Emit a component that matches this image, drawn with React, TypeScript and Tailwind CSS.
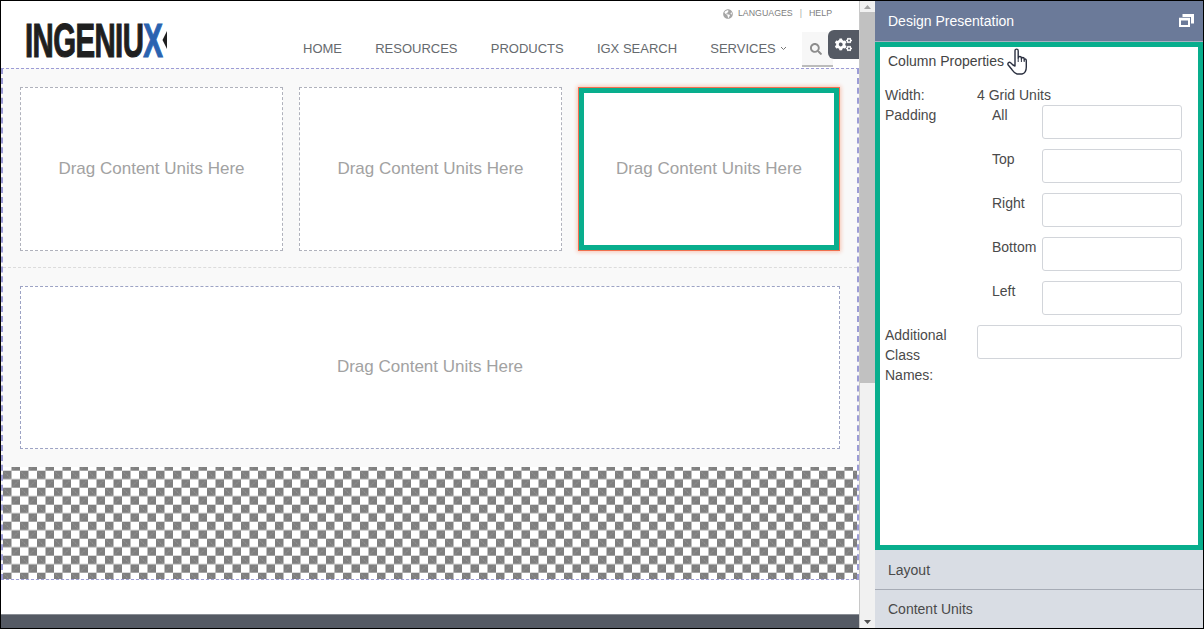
import { FaCogs, FaSearch, FaGlobeAmericas } from "react-icons/fa";

const font = "font-['Liberation_Sans',Arial,sans-serif]";

function Drop({ className }: { className: string }) {
  return (
    <div className={`flex items-center justify-center bg-white text-[17px] text-[#a2a2a2] ${className}`}>
      Drag Content Units Here
    </div>
  );
}

function PadRow({ label }: { label: string }) {
  return (
    <div className="flex h-[44px] items-start">
      <div className="w-[50px] text-[#4a4a4a]">{label}</div>
      <div className="h-[34px] w-[140px] rounded-[3px] border border-[#d2d5da] bg-white" />
    </div>
  );
}

function Checker() {
  return (
    <svg className="block h-full w-full" aria-hidden="true">
      <defs>
        <pattern id="chk" width="17" height="17" patternUnits="userSpaceOnUse" patternTransform="translate(0 3.7)">
          <rect width="17" height="17" fill="#ffffff" />
          <rect x="0" y="0" width="8.5" height="8.5" fill="#7f7f7f" />
          <rect x="8.5" y="8.5" width="8.5" height="8.5" fill="#7f7f7f" />
          <path d="M0.5 0.5 L8 8" stroke="#a0a0a0" strokeWidth="0.8" strokeDasharray="1.5 1" />
          <path d="M9 16.5 L16.5 9" stroke="#a0a0a0" strokeWidth="0.8" strokeDasharray="1.5 1" />
        </pattern>
      </defs>
      <rect width="100%" height="100%" fill="url(#chk)" />
    </svg>
  );
}

export default function App() {
  return (
    <div className={`relative flex h-[629px] w-[1204px] overflow-hidden border border-black bg-white text-[14px] ${font}`}>
      {/* page area */}
      <div className="flex w-[859px] flex-col border-r border-[#c8c8c8]">
        <header className="relative flex h-[67px] shrink-0 pl-[24px]">
          <div className="relative mt-[21px] h-[36px] w-[142px]">
            <div className="w-max origin-top-left scale-x-[0.6] whitespace-nowrap text-[49px] font-bold leading-[36px] tracking-[-1px] text-[#1f1f1f] [-webkit-text-stroke:1.2px_#1f1f1f]">
              INGENIU<span className="text-[#2a63b0] [-webkit-text-stroke:1.2px_#2a63b0]">X</span>
            </div>
            <svg className="absolute right-0 top-[8px]" width="5" height="20" viewBox="0 0 5 20">
              <path d="M5 1 L0.5 10 L5 19 Z" fill="#1f1f1f" />
            </svg>
          </div>
          <div className="flex-1">
            <div className="flex h-[26px] items-center justify-end gap-[7px] pr-[27px] text-[8.8px] text-[#808080]">
              <FaGlobeAmericas className="mr-[-2px] text-[10px] text-[#a5a5a5]" />
              <span>LANGUAGES</span>
              <span className="text-[#aaa]">|</span>
              <span>HELP</span>
            </div>
            <nav className="flex h-[40px] items-start pl-[136px] text-[13px] text-[#666a6e]">
              <div className="flex h-[43px] items-center gap-[33.2px] whitespace-nowrap">
                <span>HOME</span>
                <span>RESOURCES</span>
                <span>PRODUCTS</span>
                <span>IGX SEARCH</span>
                <span className="flex items-center gap-[4px]">
                  SERVICES
                  <svg width="7" height="5" viewBox="0 0 7 5"><path d="M1 1 L3.5 3.5 L6 1" fill="none" stroke="#777" /></svg>
                </span>
              </div>
              <div className="ml-[15px] mt-[5px] flex h-[35px] w-[31px] items-center justify-center border-b-2 border-[#bbb] bg-[#f7f7f7] pr-[2px] pt-px">
                <FaSearch className="text-[12px] text-[#8d8d8d]" />
              </div>
            </nav>
          </div>
          <div className="absolute right-0 top-[29px] flex h-[29px] w-[31px] items-center justify-center rounded-l-[6px] bg-[#555a64]">
            <FaCogs className="text-[17px] text-white" />
          </div>
        </header>

        <main className="flex h-[512px] flex-col border-x-2 border-y border-dashed border-[#9c9cd6] bg-[#f9f9f9]">
          <section className="flex h-[199px] shrink-0 gap-4 border-b border-dashed border-[#dcdcdc] pl-[17px] pt-[18px]">
            <Drop className="h-[164px] w-[263px] border border-dashed border-[#b0b2bc]" />
            <Drop className="h-[164px] w-[263px] border border-dashed border-[#b0b2bc]" />
            <Drop className="ml-px mt-px h-[162px] w-[260px] border-[5px] border-[#08ae8d] shadow-[0_0_0_1px_#f0704f,0_0_4px_2px_#f7c4b3]" />
          </section>
          <section className="h-[199px] shrink-0 pl-[17px] pt-[18px]">
            <Drop className="h-[163px] w-[820px] border border-dashed border-[#9da3c4] pb-[1px]" />
          </section>
          <section className="min-h-0 flex-1">
            <Checker />
          </section>
        </main>

        <div className="h-[34px] shrink-0 bg-white" />
        <div className="flex-1 border-t border-[#8a8e95] bg-[#555a64]" />
      </div>

      {/* scrollbar */}
      <div className="flex w-[15px] shrink-0 flex-col items-center bg-[#f1f1f1]">
        <svg className="mt-[4px] shrink-0" width="7" height="4" viewBox="0 0 7 4"><path d="M3.5 0 L7 4 L0 4 Z" fill="#a3a3a3" /></svg>
        <div className="mt-[3px] h-[371px] w-full shrink-0 bg-[#c1c1c1]" />
        <div className="flex-1" />
        <svg className="mb-[4px] shrink-0" width="7" height="4" viewBox="0 0 7 4"><path d="M0 0 L7 0 L3.5 4 Z" fill="#505050" /></svg>
      </div>

      {/* right panel */}
      <aside className="flex flex-1 flex-col">
        <div className="flex h-[41px] shrink-0 items-center justify-between border-b border-[#a8b0c2] bg-[#6b7a99] pl-[13px] pr-[9px] font-medium text-white">
          <span>Design Presentation</span>
          <svg width="15" height="13" viewBox="0 0 15 13" className="mb-[2px]">
            <path d="M3.5 0 H15 V9.5 H12 V3 H3.5 Z M0 3.8 H11 V13 H0 Z M2 6.5 V11 H9 V6.5 Z" fill="#fff" fillRule="evenodd" />
          </svg>
        </div>
        <div className="relative h-[508px] shrink-0 border-[5px] border-[#08ae8d] bg-white text-[#4a4a4a]">
          <div className="pl-[8px] pt-[5px] leading-[18px] text-[#444]">Column Properties</div>
          <div className="mt-[15px] pl-[5px]">
            <div className="flex h-[20px] items-center">
              <div className="w-[92px]">Width:</div>
              <div>4 Grid Units</div>
            </div>
            <div className="flex">
              <div className="w-[107px]">Padding</div>
              <div>
                <PadRow label="All" />
                <PadRow label="Top" />
                <PadRow label="Right" />
                <PadRow label="Bottom" />
                <PadRow label="Left" />
              </div>
            </div>
            <div className="flex">
              <div className="w-[92px] leading-[20px]">Additional<br />Class<br />Names:</div>
              <div className="h-[34px] w-[205px] rounded-[3px] border border-[#d2d5da] bg-white" />
            </div>
          </div>
          <svg className="absolute left-[127px] top-[1px]" width="20" height="27" viewBox="0 0 20 27" aria-hidden="true">
            <path
              d="M8 14 V2.8 C8 0.6 11.2 0.6 11.2 2.8 V10 C11.2 8 14.4 8 14.4 10 V11 C14.4 9 17.2 9 17.2 11 V12 C17.2 10.5 19.3 10.5 19.3 12.5 V19 C19.3 23 17.5 25.5 15 26 H10 C7.5 25.5 6 23 4.5 21 L1.2 17 C0.2 15.5 2 13.5 3.6 14.8 L6 17 L8 18 Z"
              fill="#fff"
              stroke="#2b3040"
              strokeWidth="1.4"
              strokeLinejoin="round"
            />
            <path d="M11.2 10 V14 M14.4 11 V14 M17.2 12 V14" fill="none" stroke="#2b3040" strokeWidth="1" />
          </svg>
        </div>
        <div className="flex h-[40px] shrink-0 items-center border-b border-[#a6abb5] bg-[#d9dde4] pl-[13px] pt-px text-[#4a4a4a]">Layout</div>
        <div className="flex flex-1 items-center bg-[#d9dde4] pl-[13px] text-[#4a4a4a]">Content Units</div>
      </aside>
    </div>
  );
}
